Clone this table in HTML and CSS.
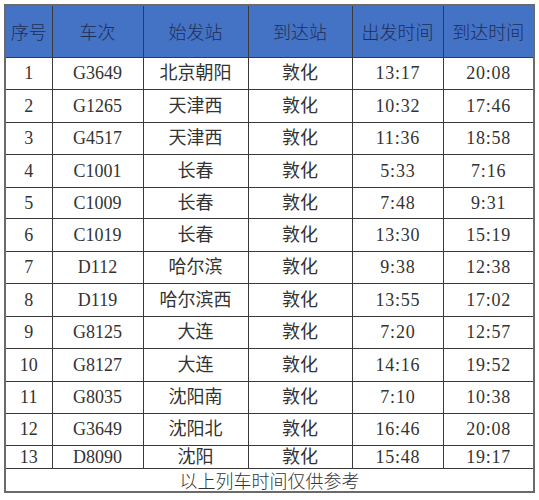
FILE: index.html
```html
<!DOCTYPE html>
<html lang="zh">
<head>
<meta charset="utf-8">
<link rel="stylesheet" href="styles.css">
</head>
<body>
<table class="timetable">
  <colgroup>
    <col class="c1"><col class="c2"><col class="c3"><col class="c4"><col class="c5"><col class="c6">
  </colgroup>
  <thead>
    <tr class="head"><th>序号</th><th>车次</th><th>始发站</th><th>到达站</th><th>出发时间</th><th>到达时间</th></tr>
  </thead>
  <tbody>
    <tr class="r32"><td>1</td><td>G3649</td><td>北京朝阳</td><td>敦化</td><td class="time">13:17</td><td class="time">20:08</td></tr>
    <tr class="r33"><td>2</td><td>G1265</td><td>天津西</td><td>敦化</td><td class="time">10:32</td><td class="time">17:46</td></tr>
    <tr class="r32"><td>3</td><td>G4517</td><td>天津西</td><td>敦化</td><td class="time">11:36</td><td class="time">18:58</td></tr>
    <tr class="r33"><td>4</td><td>C1001</td><td>长春</td><td>敦化</td><td class="time">5:33</td><td class="time">7:16</td></tr>
    <tr class="r31"><td>5</td><td>C1009</td><td>长春</td><td>敦化</td><td class="time">7:48</td><td class="time">9:31</td></tr>
    <tr class="r33"><td>6</td><td>C1019</td><td>长春</td><td>敦化</td><td class="time">13:30</td><td class="time">15:19</td></tr>
    <tr class="r32"><td>7</td><td>D112</td><td>哈尔滨</td><td>敦化</td><td class="time">9:38</td><td class="time">12:38</td></tr>
    <tr class="r33"><td>8</td><td>D119</td><td>哈尔滨西</td><td>敦化</td><td class="time">13:55</td><td class="time">17:02</td></tr>
    <tr class="r32"><td>9</td><td>G8125</td><td>大连</td><td>敦化</td><td class="time">7:20</td><td class="time">12:57</td></tr>
    <tr class="r33"><td>10</td><td>G8127</td><td>大连</td><td>敦化</td><td class="time">14:16</td><td class="time">19:52</td></tr>
    <tr class="r32"><td>11</td><td>G8035</td><td>沈阳南</td><td>敦化</td><td class="time">7:10</td><td class="time">10:38</td></tr>
    <tr class="r32"><td>12</td><td>G3649</td><td>沈阳北</td><td>敦化</td><td class="time">16:46</td><td class="time">20:08</td></tr>
    <tr class="r23"><td>13</td><td>D8090</td><td>沈阳</td><td>敦化</td><td class="time">15:48</td><td class="time">19:17</td></tr>
    <tr class="foot"><td colspan="6">以上列车时间仅供参考</td></tr>
  </tbody>
</table>
</body>
</html>
```

FILE: styles.css
```css
html, body {
  margin: 0;
  padding: 0;
  background: #ffffff;
}
body {
  padding: 4px 0 0 4px;
}
.timetable {
  border-collapse: collapse;
  table-layout: fixed;
  width: 529px;
  border: 2px solid #6a6a6a;
  font-family: "Liberation Serif", "Noto Sans CJK SC", serif;
  font-size: 18px;
  color: #333333;
}
.c1 { width: 47px; }
.c2 { width: 91px; }
.c3 { width: 105px; }
.c4 { width: 104px; }
.c5 { width: 91px; }
.c6 { width: 91px; }
.timetable th,
.timetable td {
  border: 1px solid #3a3a3a;
  padding: 0;
  text-align: center;
  vertical-align: middle;
  line-height: 1;
  white-space: nowrap;
  overflow: hidden;
}
.timetable th {
  background: #4472c4;
  color: #1e2f55;
  font-family: "Noto Sans CJK SC", sans-serif;
  font-weight: 300;
}
.head { height: 52px; }
.r31 { height: 31px; }
.r32 { height: 32px; }
.r33 { height: 33px; }
.r23 { height: 23px; }
.foot { height: 24px; }
.timetable td {
  font-weight: normal;
}
.timetable td.time {
  letter-spacing: 0.8px;
  text-indent: 0.8px;
}
.foot td {
  font-family: "Noto Sans CJK SC", sans-serif;
  font-weight: 300;
}
```
